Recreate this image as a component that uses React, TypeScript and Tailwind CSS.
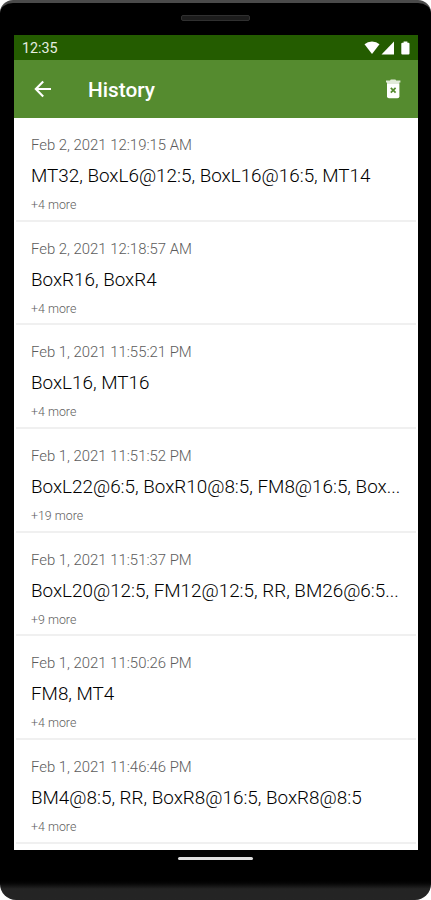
type HistoryEntry = {
  date: string;
  items: string;
  more: number;
};

const entries: HistoryEntry[] = [
  { date: "Feb 2, 2021 12:19:15 AM", items: "MT32, BoxL6@12:5, BoxL16@16:5, MT14", more: 4 },
  { date: "Feb 2, 2021 12:18:57 AM", items: "BoxR16, BoxR4", more: 4 },
  { date: "Feb 1, 2021 11:55:21 PM", items: "BoxL16, MT16", more: 4 },
  { date: "Feb 1, 2021 11:51:52 PM", items: "BoxL22@6:5, BoxR10@8:5, FM8@16:5, Box...", more: 19 },
  { date: "Feb 1, 2021 11:51:37 PM", items: "BoxL20@12:5, FM12@12:5, RR, BM26@6:5...", more: 9 },
  { date: "Feb 1, 2021 11:50:26 PM", items: "FM8, MT4", more: 4 },
  { date: "Feb 1, 2021 11:46:46 PM", items: "BM4@8:5, RR, BoxR8@16:5, BoxR8@8:5", more: 4 },
];

function StatusBar() {
  return (
    <div className="flex h-[25px] shrink-0 items-center justify-between bg-[#245c00] pl-[8px] pr-[8px] text-white">
      <span className="pt-[2px] text-[14.3px] leading-none text-[#e6eee0]">12:35</span>
      <svg className="h-[14px] w-[46px]" viewBox="0 0 46 14" fill="currentColor">
        <path d="M0.5 3.2Q3.5 0.5 8 0.5T15.5 3.2L8 13Z" />
        <path d="M30 0.5V13.5H17.5Z" />
        <path d="M38.4 1.8H39.6V0.5H43.4V1.8H44.6Q45.5 1.8 45.5 2.8V12.6Q45.5 13.6 44.5 13.6H38.3Q37.3 13.6 37.3 12.6V2.8Q37.3 1.8 38.4 1.8Z" />
      </svg>
    </div>
  );
}

function AppBar() {
  return (
    <header className="flex h-[58px] shrink-0 items-center bg-[#558b2f] pl-[20px] pr-[17px] text-white">
      <svg
        className="h-[18px] w-[18px]"
        viewBox="0 0 18 18"
        fill="none"
        stroke="currentColor"
        strokeWidth="2.1"
      >
        <path d="M17 9H2M9.2 1.4L1.8 9L9.2 16.6" />
      </svg>
      <h1 className="ml-[36px] flex-1 pt-[2px] text-[20.8px] font-medium leading-none">History</h1>
      <svg className="h-[20px] w-[16px]" viewBox="0 0 16 20">
        <path d="M2 5H14.4V17.3Q14.4 19.3 12.4 19.3H4Q2 19.3 2 17.3Z" fill="#fff" />
        <path d="M1 1.4H5L5.8 0.4H10.4L11.2 1.4H15.4V3.6H14.4V5H2V3.6H1Z" fill="#e1ead9" />
        <path d="M5.8 8.8L10.6 13.6M10.6 8.8L5.8 13.6" stroke="#558b2f" strokeWidth="1.7" />
      </svg>
    </header>
  );
}

function HistoryRow({ entry }: { entry: HistoryEntry }) {
  return (
    <li className="h-[103.7px] px-[2px]">
      <div className="h-full border-b-2 border-[#f0f0f0] pl-[15px] pt-[19px]">
        <p className="text-[14.9px] font-light leading-[17px] text-[#5c5c5c]">{entry.date}</p>
        <p className="mt-[11px] whitespace-nowrap text-[18.85px] font-light leading-[22px] text-black">
          {entry.items}
        </p>
        <p className="mt-[11px] text-[12.4px] font-light leading-[14px] text-[#606060]">
          +{entry.more} more
        </p>
      </div>
    </li>
  );
}

export default function App() {
  return (
    <div className="h-[900px] w-[431px] bg-white font-['Roboto',sans-serif]">
      <div className="flex h-full flex-col rounded-t-[13px] rounded-b-[16px] border-t-[3px] border-[#4a4a4a] bg-linear-to-b from-black from-[875px] to-[#242424] to-[886px]">
        <div className="flex h-[32px] shrink-0 justify-center pt-[12px]">
          <div className="h-[6px] w-[69px] rounded-[2px] border border-[#303030] bg-[#1c1c1c]" />
        </div>
        <main className="ml-[14px] mr-[13px] flex h-[815px] shrink-0 flex-col overflow-hidden bg-white">
          <StatusBar />
          <AppBar />
          <ul>
            {entries.map((entry) => (
              <HistoryRow key={entry.date} entry={entry} />
            ))}
          </ul>
        </main>
        <div className="mx-auto mt-[7px] h-[3px] w-[75px] rounded-sm bg-[#dedede]" />
      </div>
    </div>
  );
}
